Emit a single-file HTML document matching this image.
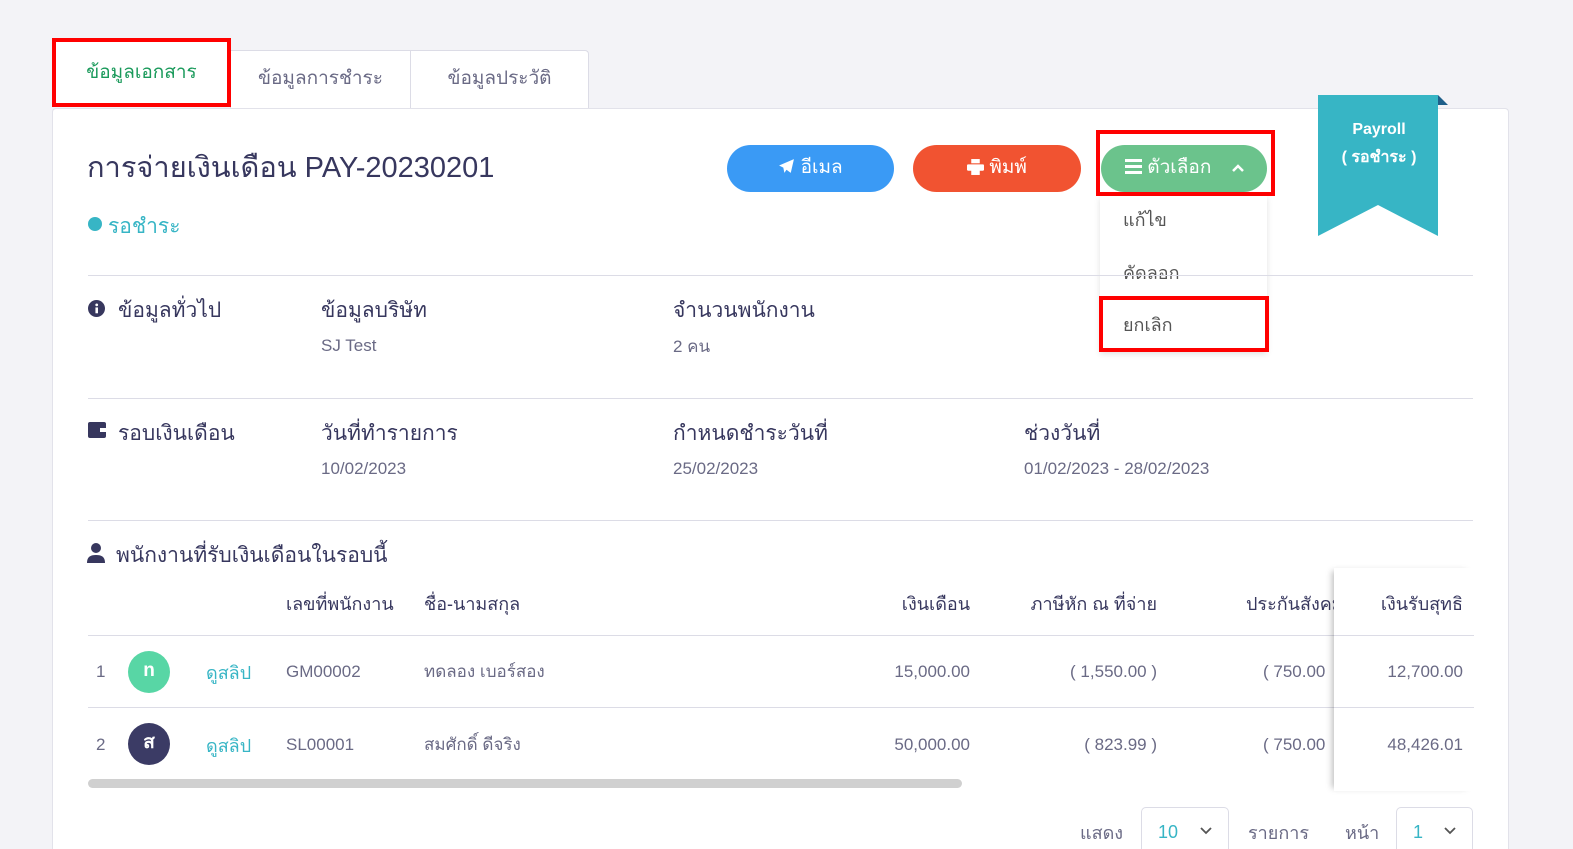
<!DOCTYPE html>
<html><head><meta charset="utf-8"><style>
*{box-sizing:border-box;margin:0;padding:0}
html{width:1573px;height:849px;overflow:hidden}
body{width:1573px;height:849px;overflow:hidden;background:#f3f3f7;font-family:"Liberation Sans","Noto Sans CJK SC",sans-serif;color:#37375e;position:relative}
.a{position:absolute;white-space:nowrap}
.card{position:absolute;left:52px;top:108px;width:1457px;height:741px;background:#fff;border:1px solid #e2e2ea;border-bottom:none;border-radius:4px 4px 0 0}
.tab{position:absolute;top:50px;height:59px;background:#fff;border:1px solid #dcdce6;border-bottom:none;font-size:19px;color:#6a6a85;text-align:center;line-height:56px}
.btn{position:absolute;top:145px;height:47px;border-radius:24px;color:#fff;font-size:19px;text-align:center;line-height:46px}
.hr{position:absolute;left:88px;width:1385px;height:1px;background:#dcdce6}
.h{font-size:21px;color:#37375e}
.v{font-size:17px;color:#6a6a85}
.th{font-size:18px;color:#37375e}
.td{font-size:17px;color:#6a6a85}
</style></head><body>
<div class="tab" style="left:230px;width:181px">ข้อมูลการชำระ</div>
<div class="tab" style="left:410px;width:179px;border-radius:0 4px 0 0">ข้อมูลประวัติ</div>
<div class="card"></div>
<div class="a" style="left:52px;top:38px;width:179px;height:69px;background:#fff;border:4px solid #f00;font-size:19px;color:#1a9a5b;text-align:center;line-height:62px">ข้อมูลเอกสาร</div>

<div class="a" style="left:87px;top:144px;font-size:29px;color:#37375e">การจ่ายเงินเดือน PAY-20230201</div>
<div class="a" style="left:88px;top:217px;width:14px;height:14px;border-radius:50%;background:#37b5c5"></div>
<div class="a" style="left:108px;top:210px;font-size:21px;color:#37b5c5">รอชำระ</div>

<div class="btn" style="left:727px;width:167px;background:#3a9af5">
<svg width="17" height="17" viewBox="0 0 16 16" style="vertical-align:-2px"><path d="M15 1L1 7l4 2 1 5 2-3 4 3z" fill="#fff"/></svg> อีเมล</div>
<div class="btn" style="left:913px;width:168px;background:#f15331">
<svg width="17" height="16" viewBox="0 0 16 15" style="vertical-align:-2px"><rect x="4" y="0" width="8" height="4" fill="#fff"/><rect x="0" y="5" width="16" height="6" rx="1" fill="#fff"/><rect x="4" y="9" width="8" height="6" fill="#fff"/></svg> พิมพ์</div>
<div class="btn" style="left:1101px;width:166px;background:#6bc38c;text-align:left;padding-left:24px">
<svg width="17" height="15" viewBox="0 0 17 15" style="vertical-align:-1px"><rect y="0" width="17" height="3" fill="#fff"/><rect y="6" width="17" height="3" fill="#fff"/><rect y="12" width="17" height="3" fill="#fff"/></svg> ตัวเลือก
<svg width="14" height="10" viewBox="0 0 14 10" style="margin-left:14px"><path d="M2 8l5-5 5 5" stroke="#fff" stroke-width="2.5" fill="none"/></svg></div>
<div class="a" style="left:1096px;top:130px;width:179px;height:66px;border:4px solid #f00"></div>

<div class="a" style="left:1100px;top:196px;width:167px;height:156px;background:#fff;box-shadow:0 2px 6px rgba(0,0,0,.12)"></div>
<div class="a" style="left:1123px;top:205px;font-size:18px;color:#555">แก้ไข</div>
<div class="a" style="left:1123px;top:258px;font-size:18px;color:#555">คัดลอก</div>
<div class="a" style="left:1123px;top:310px;font-size:18px;color:#555">ยกเลิก</div>
<div class="a" style="left:1099px;top:296px;width:170px;height:56px;border:4px solid #f00"></div>

<svg class="a" style="left:1318px;top:95px" width="130" height="142" viewBox="0 0 130 142"><path d="M120 0l10 10h-10z" fill="#1e5f8a"/><path d="M0 0h120v141L60 110 0 141z" fill="#37b5c5"/></svg>
<div class="a" style="left:1320px;top:116px;width:118px;text-align:center;color:#fff;font-size:16px;font-weight:bold;line-height:28px;white-space:normal">Payroll<br>( รอชำระ )</div>

<div class="hr" style="top:275px"></div>
<svg class="a" style="left:88px;top:300px" width="17" height="17" viewBox="0 0 16 16"><circle cx="8" cy="8" r="8" fill="#37375e"/><rect x="7" y="7" width="2.4" height="5.5" fill="#fff"/><circle cx="8.2" cy="4.6" r="1.3" fill="#fff"/></svg>
<div class="a h" style="left:118px;top:294px">ข้อมูลทั่วไป</div>
<div class="a h" style="left:321px;top:294px">ข้อมูลบริษัท</div>
<div class="a v" style="left:321px;top:336px">SJ Test</div>
<div class="a h" style="left:673px;top:294px">จำนวนพนักงาน</div>
<div class="a v" style="left:673px;top:333px">2 คน</div>

<div class="hr" style="top:398px"></div>
<svg class="a" style="left:88px;top:422px" width="18" height="16" viewBox="0 0 18 16"><rect width="18" height="16" rx="2" fill="#37375e"/><rect x="12" y="6" width="6" height="4" fill="#fff"/></svg>
<div class="a h" style="left:118px;top:417px">รอบเงินเดือน</div>
<div class="a h" style="left:321px;top:417px">วันที่ทำรายการ</div>
<div class="a v" style="left:321px;top:459px">10/02/2023</div>
<div class="a h" style="left:673px;top:417px">กำหนดชำระวันที่</div>
<div class="a v" style="left:673px;top:459px">25/02/2023</div>
<div class="a h" style="left:1024px;top:417px">ช่วงวันที่</div>
<div class="a v" style="left:1024px;top:459px">01/02/2023 - 28/02/2023</div>

<div class="hr" style="top:520px"></div>
<svg class="a" style="left:87px;top:543px" width="18" height="20" viewBox="0 0 18 20"><circle cx="9" cy="5" r="5" fill="#37375e"/><path d="M0 20c0-6 3-8 9-8s9 2 9 8z" fill="#37375e"/></svg>
<div class="a h" style="left:116px;top:539px">พนักงานที่รับเงินเดือนในรอบนี้</div>

<div class="a th" style="left:286px;top:589px">เลขที่พนักงาน</div>
<div class="a th" style="left:424px;top:589px">ชื่อ-นามสกุล</div>
<div class="a th" style="left:870px;top:589px;width:100px;text-align:right">เงินเดือน</div>
<div class="a th" style="left:1000px;top:589px;width:157px;text-align:right">ภาษีหัก ณ ที่จ่าย</div>
<div class="a th" style="left:1246px;top:589px;width:88px;overflow:hidden">ประกันสังคม</div>
<div class="hr" style="top:635px"></div>
<div class="hr" style="top:707px"></div>

<div class="a td" style="left:96px;top:662px">1</div>
<div class="a" style="left:128px;top:651px;width:42px;height:42px;border-radius:50%;background:#58d6a5;color:#fff;font-size:19px;text-align:center;line-height:40px;font-weight:bold">n</div>
<div class="a" style="left:206px;top:658px;font-size:18px;color:#37b5c5">ดูสลิป</div>
<div class="a td" style="left:286px;top:662px">GM00002</div>
<div class="a td" style="left:424px;top:658px">ทดลอง เบอร์สอง</div>
<div class="a td" style="left:870px;top:662px;width:100px;text-align:right">15,000.00</div>
<div class="a td" style="left:1000px;top:662px;width:157px;text-align:right">( 1,550.00 )</div>
<div class="a td" style="left:1263px;top:662px">( 750.00</div>

<div class="a td" style="left:96px;top:735px">2</div>
<div class="a" style="left:128px;top:723px;width:42px;height:42px;border-radius:50%;background:#3b3b65;color:#fff;font-size:19px;text-align:center;line-height:40px;font-weight:bold">ส</div>
<div class="a" style="left:206px;top:731px;font-size:18px;color:#37b5c5">ดูสลิป</div>
<div class="a td" style="left:286px;top:735px">SL00001</div>
<div class="a td" style="left:424px;top:731px">สมศักดิ์ ดีจริง</div>
<div class="a td" style="left:870px;top:735px;width:100px;text-align:right">50,000.00</div>
<div class="a td" style="left:1000px;top:735px;width:157px;text-align:right">( 823.99 )</div>
<div class="a td" style="left:1263px;top:735px">( 750.00</div>

<div class="a" style="left:1334px;top:568px;width:140px;height:223px;background:#fff;box-shadow:-5px 0 6px -3px rgba(0,0,0,.25)"></div>
<div class="a" style="left:1334px;top:635px;width:140px;height:1px;background:#dcdce6"></div>
<div class="a" style="left:1334px;top:707px;width:140px;height:1px;background:#dcdce6"></div>
<div class="a th" style="left:1340px;top:589px;width:123px;text-align:right">เงินรับสุทธิ</div>
<div class="a td" style="left:1340px;top:662px;width:123px;text-align:right">12,700.00</div>
<div class="a td" style="left:1340px;top:735px;width:123px;text-align:right">48,426.01</div>

<div class="a" style="left:88px;top:779px;width:874px;height:9px;border-radius:5px;background:#d0d0d0"></div>

<div class="a v" style="left:1080px;top:818px;font-size:18px">แสดง</div>
<div class="a" style="left:1141px;top:807px;width:88px;height:50px;border:1px solid #dcdce6;border-radius:5px"></div>
<div class="a" style="left:1158px;top:822px;font-size:18px;color:#37b5c5">10</div>
<svg class="a" style="left:1199px;top:826px" width="14" height="9" viewBox="0 0 14 9"><path d="M2 2l5 5 5-5" stroke="#555" stroke-width="1.8" fill="none"/></svg>
<div class="a v" style="left:1248px;top:818px;font-size:18px">รายการ</div>
<div class="a v" style="left:1345px;top:818px;font-size:18px">หน้า</div>
<div class="a" style="left:1396px;top:807px;width:77px;height:50px;border:1px solid #dcdce6;border-radius:5px"></div>
<div class="a" style="left:1413px;top:822px;font-size:18px;color:#37b5c5">1</div>
<svg class="a" style="left:1443px;top:826px" width="14" height="9" viewBox="0 0 14 9"><path d="M2 2l5 5 5-5" stroke="#555" stroke-width="1.8" fill="none"/></svg>
</body></html>
